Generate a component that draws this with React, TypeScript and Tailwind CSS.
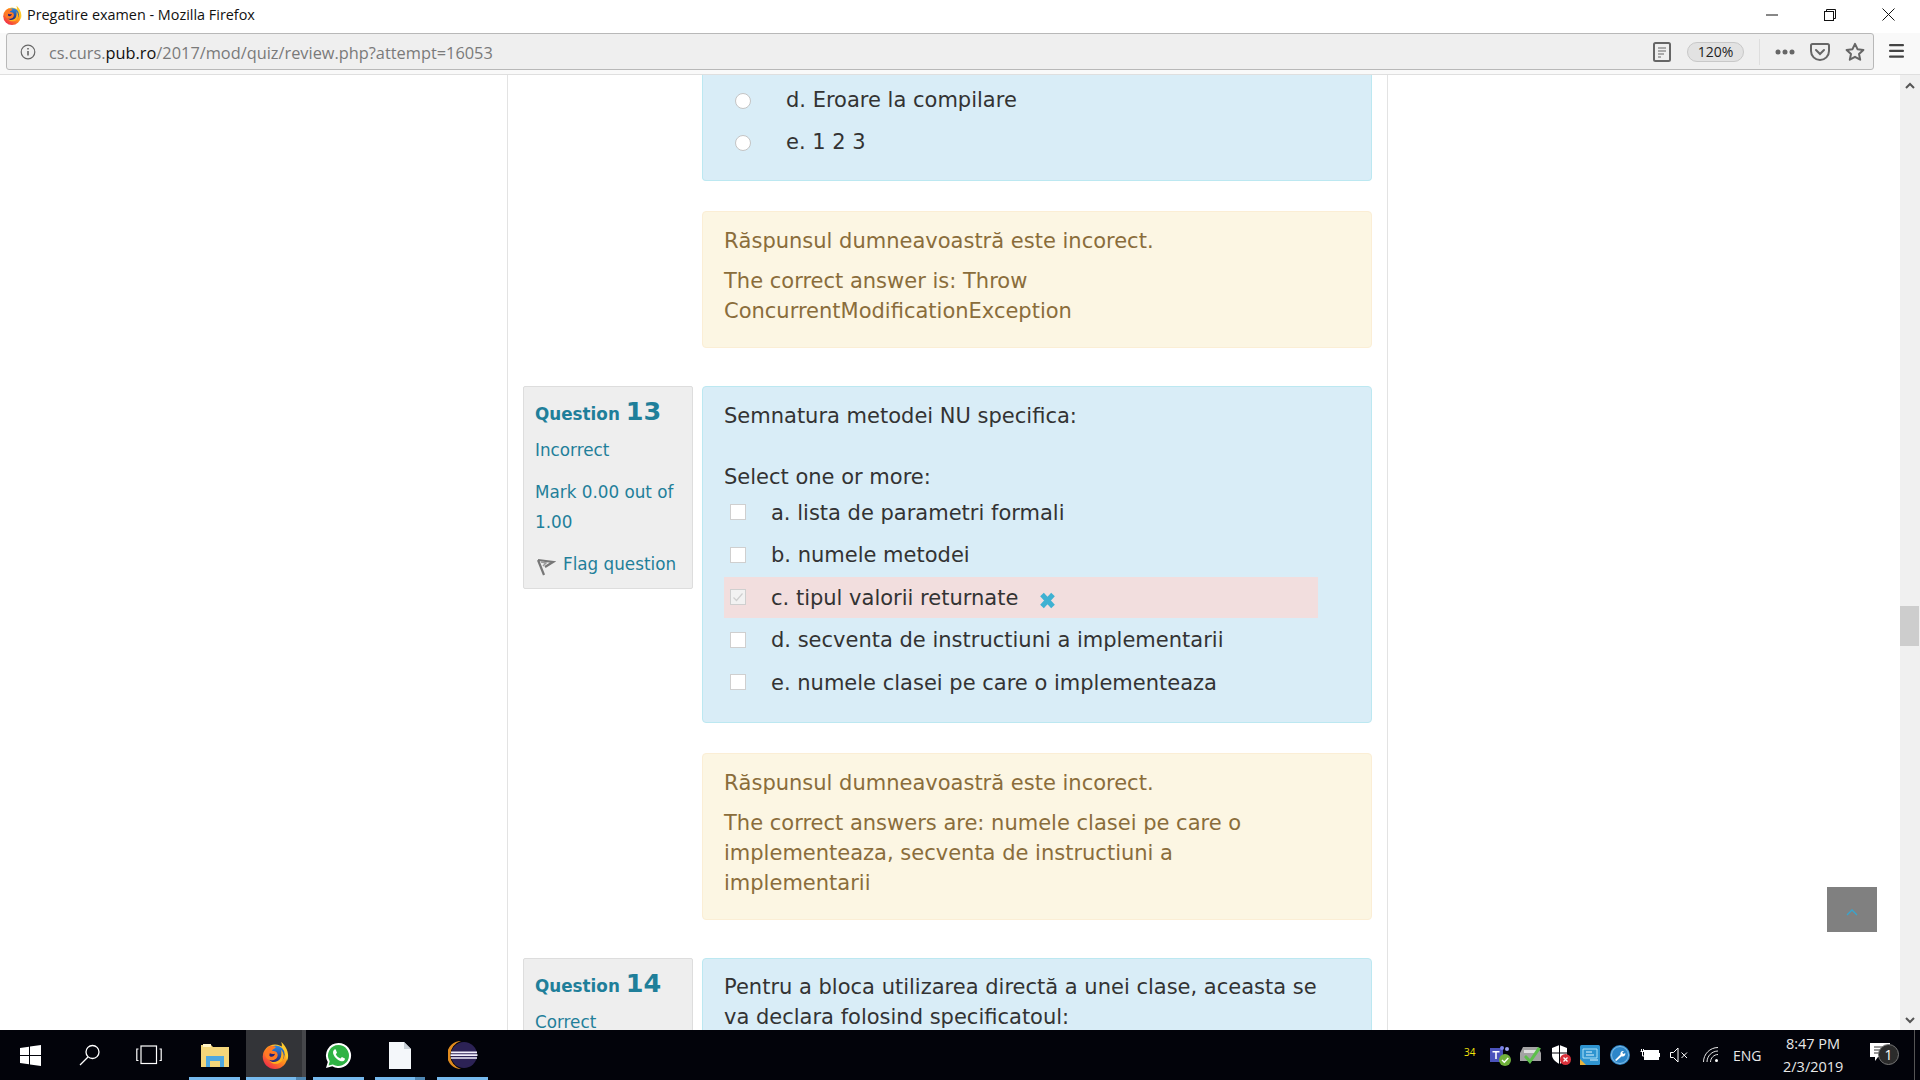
import React from "react";

const ff = "font-['DejaVu_Sans','Liberation_Sans',sans-serif]";

function FirefoxIcon({ size }: { size: number }) {
  const id = `fx${size}`;
  return (
    <svg width={size} height={size} viewBox="0 0 32 32">
      <defs>
        <linearGradient id={id} x1="0.85" y1="0.05" x2="0.2" y2="0.95">
          <stop offset="0" stopColor="#ffd52e" />
          <stop offset="0.5" stopColor="#ff8f1c" />
          <stop offset="1" stopColor="#f02a4a" />
        </linearGradient>
        <linearGradient id={`${id}b`} x1="0.5" y1="0" x2="0.5" y2="1">
          <stop offset="0" stopColor="#2a8ce8" />
          <stop offset="1" stopColor="#26226e" />
        </linearGradient>
      </defs>
      <circle cx="16" cy="18" r="14" fill={`url(#${id})`} />
      <path d="M23 1c4 3 8 9 8 16 0 2-.5 4-1.500 6-.5-7-3-11-7.500-13 2-3 2.500-6 1-9z" fill="#ffc92c" />
      <circle cx="17" cy="15" r="10" fill={`url(#${id}b)`} />
      <path d="M23 10c2 2 3 5 3 7 0 5-4 9-9 9-3 0-5-1-7-3 4 2 10 1 12-3 1.500-3 1.500-7 1-10z" fill="#ffb01f" />
      <path d="M5 12c1-3 3-5 5-6 2-.5 5 0 7 1-1 2-4 2-4.500 4 3 0 6 1 6.500 4 .5 4-3 7-7 7-3 0-6-2-7-5-.5-1.500-.5-3 0-5z" fill="#ff7a25" />
      <path d="M10 14c2 1 4 1 6 .5-.5 2-2 3.500-4 3.500-1 0-2-.5-2.500-1.500z" fill="#23217a" />
    </svg>
  );
}

function Radio() {
  return <span className="block w-[16px] h-[16px] mt-[2px] rounded-full bg-white border border-[#c4c4c4] shrink-0" />;
}

function Check({ on }: { on?: boolean }) {
  return (
    <span className={`flex items-center justify-center w-[16px] h-[16px] border border-[#cfcfcf] shrink-0 ${on ? "bg-[#f2f2f2]" : "bg-white"}`}>
      {on && (
        <svg width="12" height="12" viewBox="0 0 12 12">
          <path d="M1.5 6.5 4.5 9.5 10.5 2.5" fill="none" stroke="#cfcfcf" strokeWidth="1.2" />
        </svg>
      )}
    </span>
  );
}

function Info({ n, state, children }: { n: number; state: string; children?: React.ReactNode }) {
  return (
    <div className="w-[170px] mr-[9px] shrink-0 self-start bg-[#eeeeee] border border-[#dddddd] rounded-[2px] pl-[11px] pt-[9px] pb-[9px] text-[#1f7f9a] text-[16.8px] leading-[30px]">
      <div className="flex items-baseline h-[30px] font-bold">
        <span className="text-[16.8px]">Question</span>
        <span className="text-[25.500px] ml-[6px]">{n}</span>
      </div>
      <div className="mt-[9px]">{state}</div>
      {children}
    </div>
  );
}

function Option({ label, bad }: { label: string; bad?: boolean }) {
  return (
    <div className={`flex items-center w-[594px] h-[41px] mb-[1.6px] pl-[6px] ${bad ? "bg-[#f2dede]" : ""}`}>
      <span className="-mt-[1px]"><Check on={bad} /></span>
      <span className="ml-[25px]">{label}</span>
      {bad && (
        <svg className="ml-[21px] mt-[5px]" width="17" height="17" viewBox="0 0 17 17">
          <path d="M3 2.500 14 14.500M14 2.500 3 14.500" stroke="#3fb1d2" strokeWidth="5" />
        </svg>
      )}
    </div>
  );
}

function Feedback({ lines }: { lines: string[] }) {
  return (
    <div className="mt-[30px] bg-[#fcf6e3] border border-[#fbeed5] rounded-[4px] px-[21px] pt-[14px] pb-[21px] text-[#8a6d3b] text-[21px] leading-[30px]">
      <div className="mb-[10px]">Răspunsul dumneavoastră este incorect.</div>
      {lines.map((l) => (
        <div key={l}>{l}</div>
      ))}
    </div>
  );
}

function TaskSlot({ w, active, split, children }: { w: number; active?: boolean; split?: boolean; children: React.ReactNode }) {
  return (
    <div style={{ width: w }} className={`relative h-full flex items-center justify-center shrink-0 ${active ? "bg-[#333438]" : ""}`}>
      {children}
      <div className="absolute left-0 right-0 bottom-0 h-[3px] bg-[#76b9ed]" />
      {split && <div className="absolute right-0 bottom-0 w-[10px] h-[3px] bg-[#4f87b3]" />}
    </div>
  );
}

function TaskBar() {
  return (
    <div className={`h-[50px] shrink-0 bg-[#02030a] flex items-center text-[#e8e8e8] font-['Open_Sans','Noto_Sans',sans-serif]`}>
      <div className="w-[60px] flex justify-center shrink-0">
        <svg width="21" height="21" viewBox="0 0 21 21" fill="#fff">
          <path d="M0 3 9 1.8V10H0zM10 1.6 21 0v10H10zM0 11h9v8.2L0 18zM10 11h11v10l-11-1.6z" />
        </svg>
      </div>
      <div className="w-[60px] flex justify-center shrink-0">
        <svg width="22" height="22" viewBox="0 0 22 22" fill="none" stroke="#fff" strokeWidth="1.3">
          <circle cx="13.5" cy="8" r="6.5" />
          <path d="M9 13 1 21" />
        </svg>
      </div>
      <div className="w-[60px] flex justify-center shrink-0 -ml-[1px]">
        <svg width="26" height="20" viewBox="0 0 26 20" fill="none" stroke="#fff" strokeWidth="1.2">
          <rect x="5" y="1" width="15.5" height="17.5" />
          <path d="M2.5 4H0.8V15.500H2.5M23.500 4H25.200V15.500H23.500" />
        </svg>
      </div>
      <div className="w-[10px] shrink-0" />
      <TaskSlot w={51}>
        <svg width="28" height="24" viewBox="0 0 28 24">
          <path d="M0 2h10l2 2h16v20H0z" fill="#f4d67a" />
          <path d="M2 1h8v3H2z" fill="#fff3c4" />
          <path d="M5 13h18v11h-4v-6H9v6H5z" fill="#4fa8e0" />
        </svg>
      </TaskSlot>
      <div className="w-[6px] shrink-0" />
      <TaskSlot w={60} active split>
        <span className="-ml-[2px]"><FirefoxIcon size={28} /></span>
        <div className="absolute right-0 top-0 bottom-0 w-[4px] bg-[#46474b]" />
      </TaskSlot>
      <div className="w-[7px] shrink-0" />
      <TaskSlot w={51}>
        <svg width="27" height="27" viewBox="0 0 27 27">
          <path d="M13.500 1a12.500 12.500 0 0 0-10.700 18.900L1 26l6.300-1.700A12.500 12.500 0 1 0 13.500 1z" fill="#fff" />
          <path d="M13.500 3a10.500 10.500 0 0 0-8.800 16.200L3.600 23.500l4.300-1.100A10.500 10.500 0 1 0 13.500 3z" fill="#2fb344" />
          <path d="M9.500 7.500c-1.500 1-2 3-.8 5.500 1.300 2.600 3.700 5 6.500 6 2 .7 3.700.1 4.500-1.300.3-.6.300-1.100.2-1.300l-3-1.500-1.400 1.600c-2-.7-3.700-2.300-4.700-4.300l1.200-1.400-1.200-3.100c-.4-.4-.8-.400-1.300-.2z" fill="#fff" />
        </svg>
      </TaskSlot>
      <div className="w-[11px] shrink-0" />
      <TaskSlot w={50} split>
        <svg width="22" height="27" viewBox="0 0 22 27">
          <path d="M0 0h15l7 7v20H0z" fill="#f4f7fa" />
          <path d="M15 0l7 7h-7z" fill="#c6ced6" />
        </svg>
      </TaskSlot>
      <div className="w-[12px] shrink-0" />
      <TaskSlot w={51}>
        <svg width="30" height="28" viewBox="0 0 30 28">
          <path d="M13 0a14 14 0 0 0 0 28A14.500 14.500 0 0 1 13 0z" fill="#e08a1e" />
          <circle cx="16" cy="14" r="13" fill="#2c2255" />
          <path d="M3 10.500h26v1.700H3zM2.500 13.300h27V15h-27zM3 16.200h26v1.600H3z" fill="#f1eefb" />
        </svg>
      </TaskSlot>
      <div className="flex-1" />
      <span className="text-[#f5e60a] text-[10px] w-[26px] -mt-[6px] shrink-0">34</span>
      <div className="flex items-center shrink-0 h-full">
        <span className="w-[30px] flex">
          <svg width="21" height="21" viewBox="0 0 21 21">
            <rect x="0" y="3" width="13" height="14" fill="#4b53bc" />
            <path d="M2.500 6h7v1.500H6.800V14H5.200V7.500H2.500z" fill="#fff" />
            <circle cx="12" cy="3" r="2" fill="#7b83eb" />
            <circle cx="17" cy="4" r="2" fill="#9ea3f0" />
            <circle cx="15" cy="15" r="6" fill="#6fb03a" />
            <path d="M12 15l2.300 2.300 4-4.300" fill="none" stroke="#fff" strokeWidth="1.400" />
          </svg>
        </span>
        <span className="w-[31px] flex">
          <svg width="21" height="20" viewBox="0 0 21 20">
            <path d="M3 2h15l3 6v8H0V8z" fill="#a3a3a3" />
            <path d="M4 5h13v3H4z" fill="#dedede" />
            <path d="M6 10l4 4 8-12 3 1.500L10 19l-6-7z" fill="#5cc04a" />
          </svg>
        </span>
        <span className="w-[29px] flex">
          <svg width="20" height="20" viewBox="0 0 20 20">
            <path d="M8.500 0l7.500 3v7c0 4-3.500 7-7.500 9C4.500 17 1 14 1 10V3z" fill="#fff" />
            <path d="M8.500 0v19M1 8h15" stroke="#02030a" strokeWidth="1" />
            <circle cx="14.500" cy="14.500" r="5.500" fill="#d9313b" />
            <path d="M12.500 12.500l4 4M16.500 12.500l-4 4" stroke="#fff" strokeWidth="1.300" />
          </svg>
        </span>
        <span className="w-[30px] flex">
          <svg width="20" height="20" viewBox="0 0 20 20">
            <rect width="20" height="20" rx="1.500" fill="#2f94d0" />
            <path d="M3 4h14v9H3z" fill="none" stroke="#a9e0f8" strokeWidth="1" />
            <path d="M6 7h6M6 10h8M10 15h8" stroke="#dff4ff" strokeWidth="1" />
            <path d="M0 14l6 6H0z" fill="#e8b23a" />
          </svg>
        </span>
        <span className="w-[30px] flex">
          <svg width="20" height="20" viewBox="0 0 20 20">
            <circle cx="10" cy="10" r="10" fill="#2d86c9" />
            <circle cx="10" cy="10" r="8.500" fill="none" stroke="#9ccbea" strokeWidth=".8" />
            <path d="M5 15l5.500-5.500c-.5-2 1-4 3.500-3.500l-1.800 1.800 1.300 1.300L15.300 8c.4 2.500-1.500 4-3.500 3.300L6.300 16z" fill="#fff" />
          </svg>
        </span>
        <span className="w-[30px] flex">
          <svg width="20" height="14" viewBox="0 0 20 14" fill="none" stroke="#fff" strokeWidth="1">
            <rect x="4.500" y="2.500" width="14" height="9" fill="#fff" />
            <path d="M19.500 5v4M0.500 3.500h4M1.500 1v2.500M3.500 1v2.500M2.500 3.500V8H4.500" />
          </svg>
        </span>
        <span className="w-[33px] flex">
          <svg width="19" height="16" viewBox="0 0 19 16" fill="none" stroke="#fff" strokeWidth="1">
            <path d="M.5 5.500h3L8 1v14L3.500 10.500h-3z" />
            <path d="M11.500 5.500l5.500 5.500M17 5.500l-5.500 5.500" />
          </svg>
        </span>
        <span className="w-[30px] flex">
          <svg width="16" height="16" viewBox="0 0 16 16" fill="none" stroke="#e6e6e6" strokeWidth="1">
            <path d="M.5 15C.5 7 7 .5 15 .5M4 15c0-6 5-11 11-11M7.500 15c0-4 3.500-7.500 7.500-7.500" />
            <circle cx="13.500" cy="13.500" r="1.500" fill="#fff" stroke="none" />
          </svg>
        </span>
        <span className="w-[50px] text-[14px]">ENG</span>
      </div>
      <div className="w-[60px] text-center text-[14.5px] leading-[23px] shrink-0 whitespace-nowrap -mt-[1px]">
        <div>8:47 PM</div>
        <div>2/3/2019</div>
      </div>
      <div className="relative w-[77px] h-full flex items-center shrink-0 pl-[27px]">
        <svg width="20" height="18" viewBox="0 0 20 18" className="-mt-[6px]">
          <path d="M0 0h20v14H8l-3 4v-4H0z" fill="#fff" />
          <path d="M4 4h12M4 7h12M4 10h8" stroke="#333" strokeWidth="1" />
        </svg>
        <div className="absolute left-[35px] top-[14px] w-[21px] h-[21px] rounded-full bg-[#2b2b2b] border border-[#777] flex items-center justify-center text-[14px] text-white">1</div>
        <div className="absolute right-[5px] top-0 bottom-0 w-px bg-[#555]" />
      </div>
    </div>
  );
}

export default function App() {
  return (
    <div className="w-[1920px] h-[1080px] flex flex-col overflow-hidden bg-white">
      {/* window title */}
      <div className="h-[33px] shrink-0 flex items-center bg-white font-['Open_Sans','Noto_Sans',sans-serif]">
        <span className="ml-[2px] -mt-[4px]"><FirefoxIcon size={20} /></span>
        <span className="ml-[5px] -mt-[4px] text-[14.4px] text-[#111]">Pregatire examen - Mozilla Firefox</span>
        <div className="flex-1" />
        <svg className="mr-[46px] -mt-[4px]" width="12" height="2" viewBox="0 0 12 2"><path d="M0 1h12" stroke="#111" strokeWidth="1" /></svg>
        <svg className="mr-[46px] -mt-[4px]" width="12" height="12" viewBox="0 0 12 12" fill="none" stroke="#111" strokeWidth="1"><rect x=".5" y="2.500" width="9" height="9" /><path d="M2.500 2.500V.5h9v9h-2" /></svg>
        <svg className="mr-[25px] -mt-[4px]" width="13" height="13" viewBox="0 0 13 13" stroke="#111" strokeWidth="1"><path d="M.5.5l12 12M12.500.5l-12 12" /></svg>
      </div>
      {/* url bar */}
      <div className="h-[42px] shrink-0 bg-[#f9f9f9] border-b border-[#dfdfdf] flex items-start pl-[6px] pr-[16px] font-['Open_Sans','Noto_Sans',sans-serif]">
        <div className="flex-1 h-[37px] bg-[#efefef] border border-[#b8b8b8] rounded-[3px] flex items-center pl-[13px] pr-[8px]">
          <svg width="16" height="16" viewBox="0 0 16 16" fill="none" stroke="#666" strokeWidth="1.200">
            <circle cx="8" cy="8" r="6.800" />
            <path d="M8 7v4.500M8 4v1.600" strokeWidth="1.600" />
          </svg>
          <span className="ml-[13px] mt-[3px] text-[16.350px] text-[#7a7a7a]">cs.curs.<span className="text-[#111]">pub.ro</span>/2017/mod/quiz/review.php?attempt=16053</span>
          <div className="flex-1" />
          <svg width="18" height="20" viewBox="0 0 18 20" fill="none">
            <rect x="1" y="1" width="16" height="18" rx="1.500" stroke="#666" strokeWidth="2" />
            <path d="M5 6h8M5 9h8M5 12h6M5 15h3" stroke="#666" strokeWidth="1.200" />
          </svg>
          <div className="ml-[16px] w-[57px] h-[20px] rounded-full bg-[#e2e2e2] border border-[#c8c8c8] flex items-center justify-center text-[14px] text-[#222]">120%</div>
          <div className="ml-[15px] w-px h-[26px] bg-[#dedede]" />
          <svg className="ml-[15px]" width="20" height="6" viewBox="0 0 20 6" fill="#666">
            <circle cx="3" cy="3" r="2.500" /><circle cx="10" cy="3" r="2.500" /><circle cx="17" cy="3" r="2.500" />
          </svg>
          <svg className="ml-[15px]" width="20" height="18" viewBox="0 0 20 18" fill="none" stroke="#666" strokeWidth="2">
            <path d="M2.500 1h15A1.500 1.500 0 0 1 19 2.500V8A9 9 0 0 1 1 8V2.500A1.500 1.500 0 0 1 2.500 1z" />
            <path d="M6 7l4 4 4-4" strokeLinecap="round" />
          </svg>
          <svg className="ml-[15px]" width="20" height="20" viewBox="0 0 20 20" fill="none" stroke="#666" strokeWidth="2" strokeLinejoin="round">
            <path d="M10 1.800l2.500 5.400 5.900.7-4.400 4 1.200 5.800L10 14.800 4.800 17.700 6 11.900 1.600 7.900l5.900-.7z" />
          </svg>
        </div>
        <svg className="ml-[15px] mt-[11px]" width="15" height="14" viewBox="0 0 15 14" fill="#444">
          <rect width="15" height="2.200" rx="1" /><rect y="5.800" width="15" height="2.200" rx="1" /><rect y="11.600" width="15" height="2.200" rx="1" />
        </svg>
      </div>
      {/* page */}
      <div className="relative flex-1 min-h-0 flex overflow-hidden">
        <div className={`flex-1 min-w-0 overflow-hidden ${ff} text-[21px] text-[#333333]`}>
          <div className="ml-[507px] w-[881px] h-full border-x border-[#e3e3e3] pl-[15px] overflow-hidden">
            {/* tail of question 12 */}
            <div className="ml-[179px] w-[670px]">
              <div className="bg-[#d9edf7] border border-[#bce8f1] border-t-0 rounded-b-[4px] h-[106px] pl-[32px] pt-[4px] leading-[42px]">
                <div className="flex items-center h-[42px]"><Radio /><span className="ml-[35px]">d. Eroare la compilare</span></div>
                <div className="flex items-center h-[42px]"><Radio /><span className="ml-[35px]">e. 1 2 3</span></div>
              </div>
              <Feedback lines={["The correct answer is: Throw", "ConcurrentModificationException"]} />
            </div>
            {/* question 13 */}
            <div className="flex mt-[38px]">
              <Info n={13} state="Incorrect">
                <div className="mt-[12px]">Mark 0.00 out of<br />1.00</div>
                <div className="flex items-center mt-[12px] h-[30px]">
                  <svg width="20" height="20" viewBox="0 0 20 20" className="mt-[5px] ml-[1px]" fill="none" stroke="#777" strokeWidth="2.200">
                    <path d="M2 3l6 15M2 3l15 2-8 5" />
                    <path d="M5 5l5 1-3 3" stroke="#999" strokeWidth="1.500" />
                  </svg>
                  <span className="ml-[7px]">Flag question</span>
                </div>
              </Info>
              <div className="w-[670px]">
                <div className="bg-[#d9edf7] border border-[#bce8f1] rounded-[4px] h-[337px] px-[21px] pt-[14px] leading-[30px]">
                  <div>Semnatura metodei NU specifica:</div>
                  <div className="mt-[31px]">Select one or more:</div>
                  <Option label="a. lista de parametri formali" />
                  <Option label="b. numele metodei" />
                  <Option label="c. tipul valorii returnate" bad />
                  <Option label="d. secventa de instructiuni a implementarii" />
                  <Option label="e. numele clasei pe care o implementeaza" />
                </div>
                <Feedback lines={["The correct answers are: numele clasei pe care o", "implementeaza, secventa de instructiuni a", "implementarii"]} />
              </div>
            </div>
            {/* question 14 */}
            <div className="flex mt-[38px]">
              <Info n={14} state="Correct" />
              <div className="w-[670px] bg-[#d9edf7] border border-[#bce8f1] rounded-[4px] h-[200px] px-[21px] pt-[13px] leading-[30px]">
                <div>Pentru a bloca utilizarea directă a unei clase, aceasta se</div>
                <div>va declara folosind specificatoul:</div>
              </div>
            </div>
          </div>
        </div>
        {/* scrollbar */}
        <div className="w-[20px] shrink-0 bg-[#f0f0f0] flex flex-col items-stretch">
          <div className="h-[20px] flex items-center justify-center">
            <svg width="10" height="7" viewBox="0 0 10 7" fill="none" stroke="#555" strokeWidth="2"><path d="M1 6l4-4 4 4" /></svg>
          </div>
          <div className="h-[40px] mt-[511px] mr-[1px] bg-[#cdcdcd]" />
          <div className="flex-1" />
          <div className="h-[20px] flex items-center justify-center">
            <svg width="10" height="7" viewBox="0 0 10 7" fill="none" stroke="#555" strokeWidth="2"><path d="M1 1l4 4 4-4" /></svg>
          </div>
        </div>
        {/* back to top */}
        <div className="absolute left-[1827px] top-[812px] w-[50px] h-[45px] bg-[#808080] flex items-center justify-center">
          <svg width="12" height="8" viewBox="0 0 12 8" fill="none" stroke="#35a5cf" strokeWidth="1.300" className="mt-[4px]"><path d="M1 7l5-5 5 5" /></svg>
        </div>
      </div>
      <TaskBar />
    </div>
  );
}
